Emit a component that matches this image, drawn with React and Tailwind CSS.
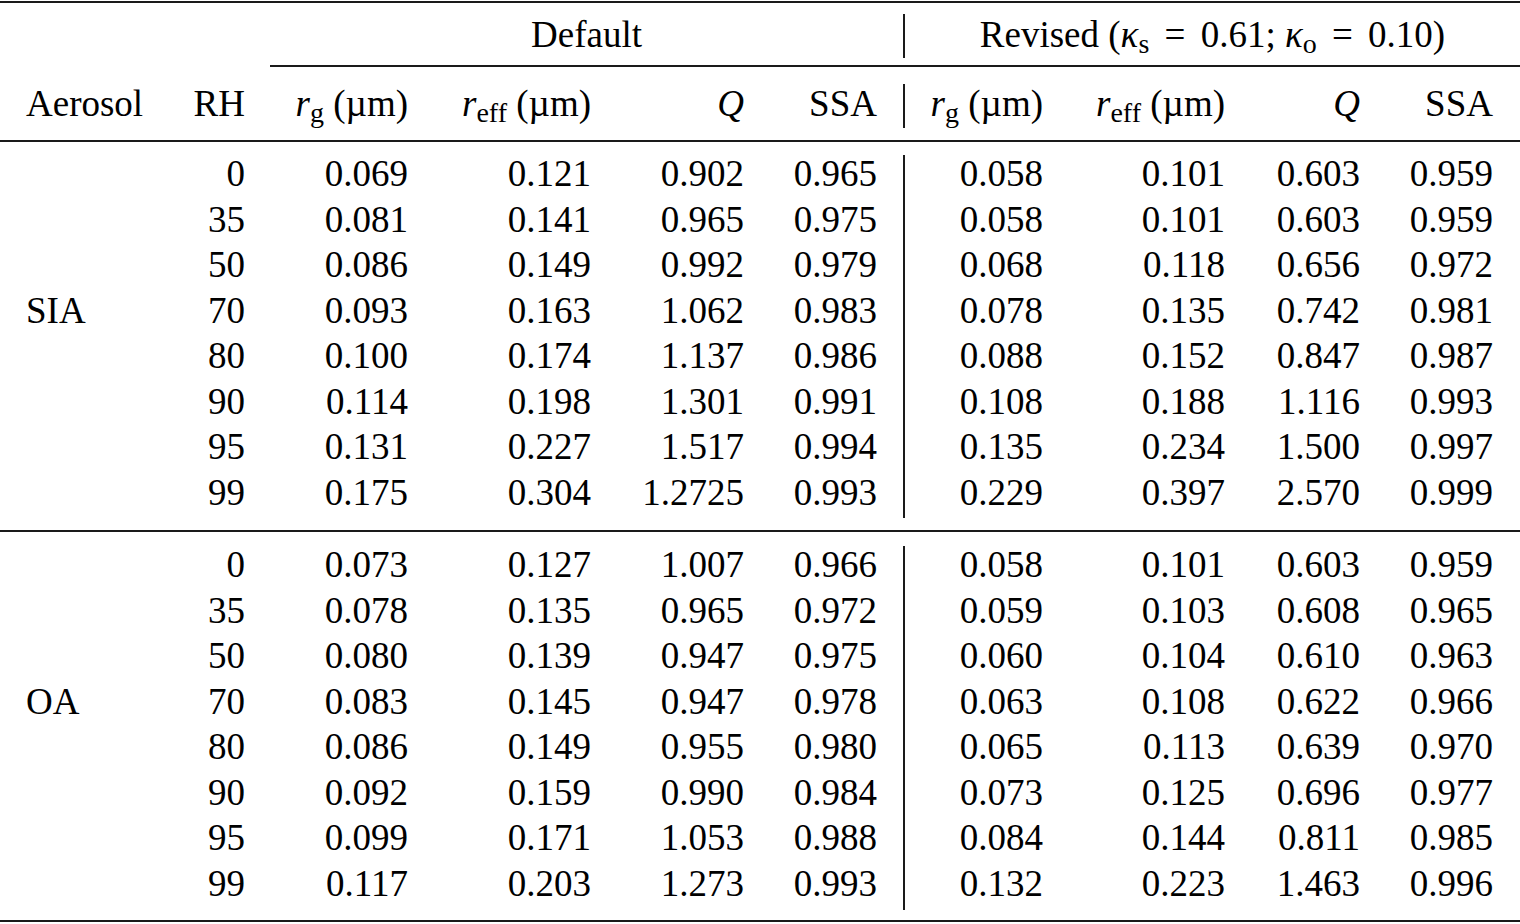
import React from "react";

const SIA = [
  ["0", "0.069", "0.121", "0.902", "0.965", "0.058", "0.101", "0.603", "0.959"],
  ["35", "0.081", "0.141", "0.965", "0.975", "0.058", "0.101", "0.603", "0.959"],
  ["50", "0.086", "0.149", "0.992", "0.979", "0.068", "0.118", "0.656", "0.972"],
  ["70", "0.093", "0.163", "1.062", "0.983", "0.078", "0.135", "0.742", "0.981"],
  ["80", "0.100", "0.174", "1.137", "0.986", "0.088", "0.152", "0.847", "0.987"],
  ["90", "0.114", "0.198", "1.301", "0.991", "0.108", "0.188", "1.116", "0.993"],
  ["95", "0.131", "0.227", "1.517", "0.994", "0.135", "0.234", "1.500", "0.997"],
  ["99", "0.175", "0.304", "1.2725", "0.993", "0.229", "0.397", "2.570", "0.999"],
];

const OA = [
  ["0", "0.073", "0.127", "1.007", "0.966", "0.058", "0.101", "0.603", "0.959"],
  ["35", "0.078", "0.135", "0.965", "0.972", "0.059", "0.103", "0.608", "0.965"],
  ["50", "0.080", "0.139", "0.947", "0.975", "0.060", "0.104", "0.610", "0.963"],
  ["70", "0.083", "0.145", "0.947", "0.978", "0.063", "0.108", "0.622", "0.966"],
  ["80", "0.086", "0.149", "0.955", "0.980", "0.065", "0.113", "0.639", "0.970"],
  ["90", "0.092", "0.159", "0.990", "0.984", "0.073", "0.125", "0.696", "0.977"],
  ["95", "0.099", "0.171", "1.053", "0.988", "0.084", "0.144", "0.811", "0.985"],
  ["99", "0.117", "0.203", "1.273", "0.993", "0.132", "0.223", "1.463", "0.996"],
];

const Sub = ({ children }) => (
  <span className="relative top-[6px] text-[28px] not-italic">{children}</span>
);

const Rg = () => (
  <span>
    <i>r</i>
    <Sub>g</Sub> (µm)
  </span>
);
const Reff = () => (
  <span>
    <i>r</i>
    <Sub>eff</Sub> (µm)
  </span>
);

const Eq = () => <span className="mx-[6px]"> = </span>;

const Rule = ({ cls = "" }) => <div className={"h-[2px] bg-[#1a1a1a] " + cls} />;

function Block({ label, rows, pt, lineMt, lineMb }) {
  return (
    <div className="flex h-[388px]">
      <div
        className={"grid grid-cols-[170px_100px_163px_183px_153px_134px] auto-rows-[45.5px] w-[903px] " + pt}
      >
        {rows.map((r, i) => (
          <React.Fragment key={i}>
            <div className="flex items-center pl-[26px]">{i === 3 ? label : ""}</div>
            <div className="flex items-center justify-end pr-[25px]">{r[0]}</div>
            <div className="flex items-center justify-end pr-[25px]">{r[1]}</div>
            <div className="flex items-center justify-end pr-[25px]">{r[2]}</div>
            <div className="flex items-center justify-end pr-[25px]">{r[3]}</div>
            <div className="flex items-center justify-end pr-[26px]">{r[4]}</div>
          </React.Fragment>
        ))}
      </div>
      <div className={"w-[2px] bg-[#1a1a1a] " + lineMt + " " + lineMb} />
      <div className={"grid grid-cols-[163px_182px_135px_135px] auto-rows-[45.5px] w-[615px] " + pt}>
        {rows.map((r, i) => (
          <React.Fragment key={i}>
            <div className="flex items-center justify-end pr-[25px]">{r[5]}</div>
            <div className="flex items-center justify-end pr-[25px]">{r[6]}</div>
            <div className="flex items-center justify-end pr-[25px]">{r[7]}</div>
            <div className="flex items-center justify-end pr-[27px]">{r[8]}</div>
          </React.Fragment>
        ))}
      </div>
    </div>
  );
}

export default function App() {
  return (
    <div
      className="w-[1520px] h-[924px] bg-white text-black text-[37px] leading-none overflow-hidden"
      style={{ fontFamily: '"Liberation Serif", "Times New Roman", serif' }}
    >
      <Rule cls="mt-[1px]" />
      {/* Header row 1 */}
      <div className="flex h-[62px]">
        <div className="w-[903px] flex">
          <div className="w-[270px]" />
          <div className="flex-1 flex items-center justify-center">Default</div>
        </div>
        <div className="w-[2px] bg-[#1a1a1a] mt-[11px] mb-[7px]" />
        <div className="w-[615px] flex items-center justify-center">
          <span className="whitespace-pre">
            Revised (<i>κ</i>
            <Sub>s</Sub>
            <Eq />
            0.61; <i>κ</i>
            <Sub>o</Sub>
            <Eq />
            0.10)
          </span>
        </div>
      </div>
      <div className="flex">
        <div className="w-[270px]" />
        <Rule cls="flex-1" />
      </div>
      {/* Header row 2 */}
      <div className="flex h-[73px]">
        <div className="grid grid-cols-[170px_100px_163px_183px_153px_134px] w-[903px]">
          <div className="flex items-center pl-[26px]">Aerosol</div>
          <div className="flex items-center justify-end pr-[25px]">RH</div>
          <div className="flex items-center justify-end pr-[25px]"><Rg /></div>
          <div className="flex items-center justify-end pr-[25px]"><Reff /></div>
          <div className="flex items-center justify-end pr-[25px]"><i>Q</i></div>
          <div className="flex items-center justify-end pr-[26px]">SSA</div>
        </div>
        <div className="w-[2px] bg-[#1a1a1a] mt-[17px] mb-[12px]" />
        <div className="grid grid-cols-[163px_182px_135px_135px] w-[615px]">
          <div className="flex items-center justify-end pr-[25px]"><Rg /></div>
          <div className="flex items-center justify-end pr-[25px]"><Reff /></div>
          <div className="flex items-center justify-end pr-[25px]"><i>Q</i></div>
          <div className="flex items-center justify-end pr-[27px]">SSA</div>
        </div>
      </div>
      <Rule />
      <Block label="SIA" rows={SIA} pt="pt-[9px]" lineMt="mt-[13px]" lineMb="mb-[12px]" />
      <Rule />
      <Block label="OA" rows={OA} pt="pt-[10px]" lineMt="mt-[14px]" lineMb="mb-[10px]" />
      <Rule />
    </div>
  );
}
